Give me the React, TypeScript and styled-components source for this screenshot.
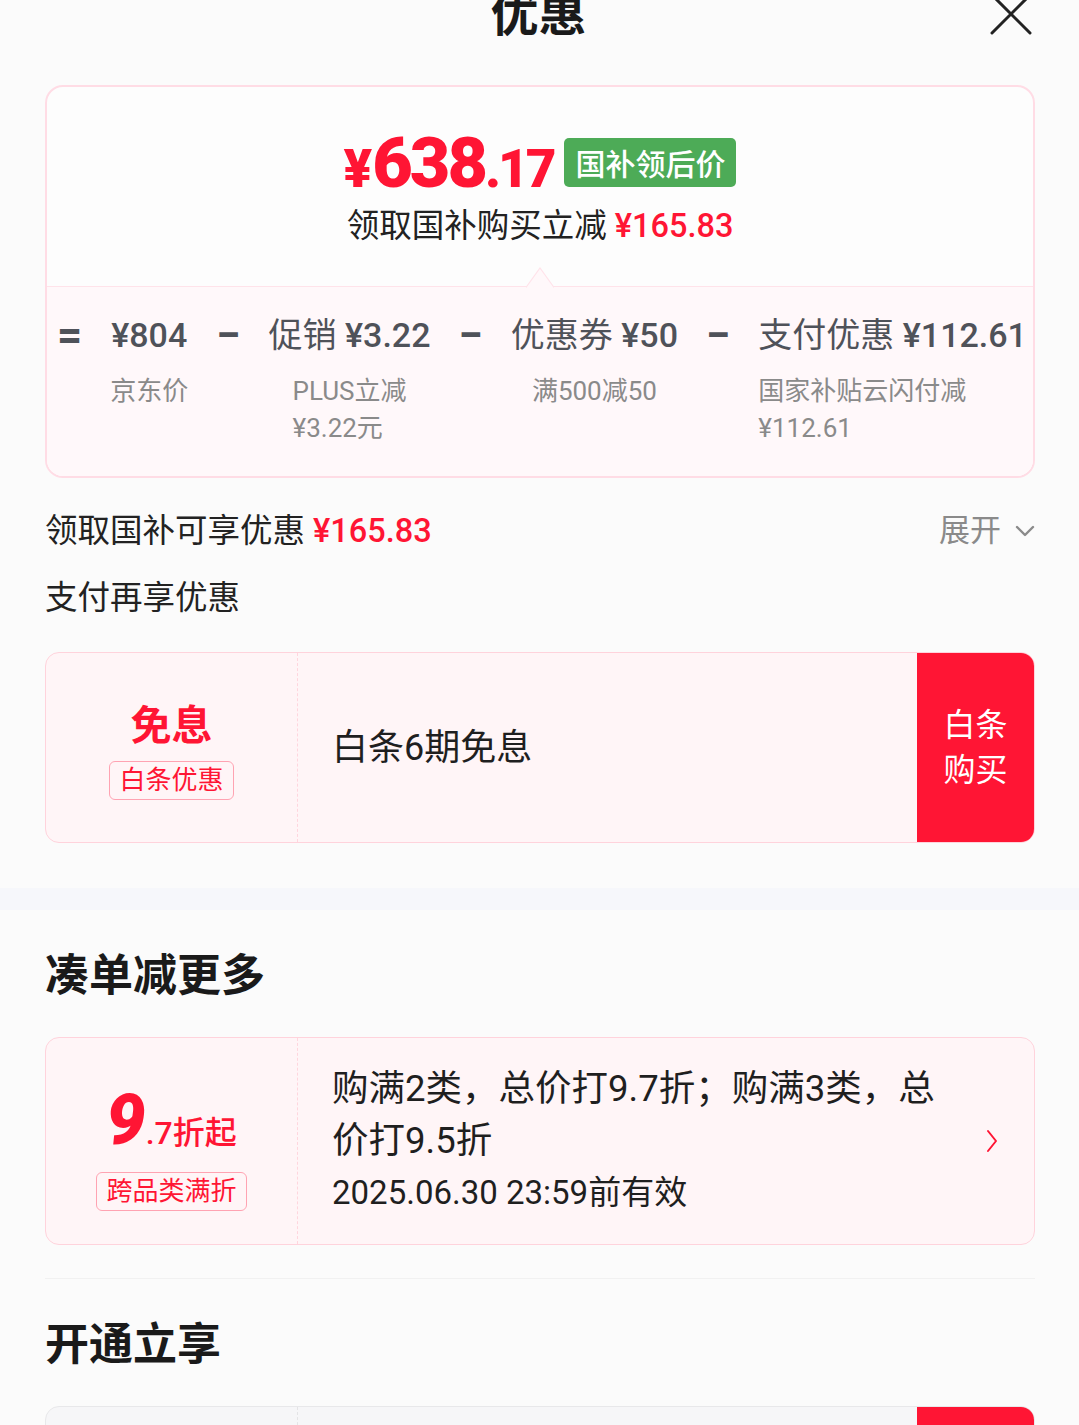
import React from 'react';
import styled, { createGlobalStyle } from 'styled-components';

const RED = '#ff1534';
const SLATE = '#4f5259';

const GlobalStyle = createGlobalStyle`
  html, body {
    margin: 0;
    padding: 0;
    background: #fbfbfb;
  }
  body {
    font-family: Roboto, "Noto Sans CJK SC", sans-serif;
    color: #222;
    overflow: hidden;
  }
`;

const Page = styled.div`
  width: 1079px;
  display: flex;
  flex-direction: column;
`;

const Section = styled.div`
  display: flex;
  flex-direction: column;
  padding: 0 44px 0 45px;
`;

const Header = styled.div`
  display: grid;
  grid-template-columns: 1fr auto 1fr;
  align-items: start;
  height: 94px;
  margin-top: -9px;
  padding: 0 47px 0 45px;
`;

const Title = styled.div`
  grid-column: 2;
  font-size: 48px;
  line-height: 48px;
  font-weight: 700;
  color: #1a1a1a;
`;

const CloseButton = styled.div`
  grid-column: 3;
  justify-self: end;
  width: 42px;
  height: 42px;
  margin-top: 2px;
`;

const PriceCard = styled.div`
  display: flex;
  flex-direction: column;
  border: 2px solid #ffdce5;
  border-radius: 18px;
  background: #fdfdfd;
  overflow: hidden;
`;

const PriceTop = styled.div`
  display: flex;
  flex-direction: column;
  align-items: center;
  height: 199px;
  padding-top: 45px;
  box-sizing: border-box;
`;

const PriceRow = styled.div`
  display: flex;
  align-items: center;
  gap: 11px;
  height: 66px;
`;

const PriceValue = styled.div`
  padding-top: 14px;
  color: ${RED};
  font-weight: 900;
  line-height: 66px;
  white-space: nowrap;
`;

const PricePart = styled.span<{ size: number; spacing: number }>`
  font-size: ${(p) => p.size}px;
  letter-spacing: ${(p) => p.spacing}px;
`;

const GreenTag = styled.div`
  display: flex;
  align-items: center;
  justify-content: center;
  width: 172px;
  height: 49px;
  margin-top: -6px;
  border-radius: 5px;
  background: #4dab57;
  color: #fff;
  font-size: 30px;
  font-weight: 500;
`;

const SubTitle = styled.div`
  margin-top: 8px;
  font-size: 32.5px;
  line-height: 40px;
  color: #222;
`;

const RedText = styled.span`
  color: ${RED};
  font-weight: 500;
`;

const PriceBottom = styled.div`
  position: relative;
  flex: 1;
  display: flex;
  justify-content: space-between;
  align-items: flex-start;
  padding: 28px 6px 29px 10px;
  border-top: 1px solid #ffe3ea;
  background: #fff8fa;
`;

const Pointer = styled.svg`
  position: absolute;
  top: -20px;
  left: calc(50% - 14px);
`;

const Operator = styled.div`
  font-size: 44px;
  line-height: 40px;
  font-weight: 700;
  color: ${SLATE};
`;

const FormulaItem = styled.div<{ start?: boolean }>`
  display: flex;
  flex-direction: column;
  align-items: ${(p) => (p.start ? 'flex-start' : 'center')};
`;

const FormulaValue = styled.div`
  font-size: 34px;
  line-height: 40px;
  font-weight: 400;
  color: ${SLATE};
  white-space: nowrap;
`;

const Amount = styled.span`
  font-weight: 500;
`;

const FormulaLabel = styled.div`
  margin-top: 18px;
  font-size: 26px;
  line-height: 37px;
  color: #8a8a8a;
  text-align: left;
`;

const InfoRow = styled.div<{ gap: number }>`
  display: flex;
  justify-content: space-between;
  align-items: center;
  margin-top: ${(p) => p.gap}px;
  font-size: 32.5px;
  line-height: 44px;
`;

const Expand = styled.div`
  display: flex;
  align-items: center;
  gap: 14px;
  font-size: 31px;
  color: #8a8a8a;
`;

const CouponCard = styled.div<{ muted?: boolean; height: number }>`
  display: grid;
  grid-template-columns: 252px 1fr ${(p) => (p.muted ? '117px' : 'auto')};
  height: ${(p) => p.height}px;
  margin-top: 32px;
  border: 1px solid ${(p) => (p.muted ? '#e8e8ea' : '#ffd3dc')};
  border-radius: 14px;
  background: ${(p) => (p.muted ? '#f6f6f8' : '#fff5f7')};
  box-sizing: border-box;
  overflow: hidden;
`;

const CouponLeft = styled.div<{ muted?: boolean }>`
  display: flex;
  flex-direction: column;
  align-items: center;
  justify-content: center;
  gap: 12px;
  border-right: 1px dashed ${(p) => (p.muted ? '#e4e4e6' : '#ffd6de')};
`;

const CouponBig = styled.div`
  color: ${RED};
  font-size: 41px;
  line-height: 46px;
  font-weight: 700;
`;

const CouponTag = styled.div`
  padding: 0 9px;
  height: 39px;
  line-height: 37px;
  border: 1px solid #ffa3b2;
  border-radius: 6px;
  color: ${RED};
  font-size: 26px;
  box-sizing: border-box;
`;

const CouponMiddle = styled.div`
  display: flex;
  align-items: center;
  justify-content: space-between;
  padding: 0 36px 0 34px;
`;

const CouponText = styled.div<{ size: number }>`
  max-width: 615px;
  font-size: ${(p) => p.size}px;
  line-height: 52px;
  color: #1f1f1f;
`;

const CouponNote = styled.div`
  font-size: 33px;
`;

const BuyButton = styled.div`
  display: flex;
  align-items: center;
  justify-content: center;
  width: 117px;
  background: ${RED};
  color: #fff;
  font-size: 32px;
  line-height: 45px;
  text-align: center;
`;

const Discount = styled.div`
  display: flex;
  align-items: baseline;
  color: ${RED};
  font-weight: 700;
  line-height: 70px;
`;

const DiscountBig = styled.span`
  font-size: 70px;
  font-weight: 900;
  font-style: italic;
`;

const DiscountSmall = styled.span`
  font-size: 32px;
  font-weight: 500;
`;

const GrayBand = styled.div`
  height: 22px;
  margin-top: 45px;
  background: #f6f7fb;
`;

const SectionTitle = styled.div<{ gap: number }>`
  margin-top: ${(p) => p.gap}px;
  font-size: 44px;
  line-height: 50px;
  font-weight: 700;
  color: #1a1a1a;
`;

const Divider = styled.div`
  height: 1px;
  margin-top: 33px;
  background: #f1f1f1;
`;

function App() {
  return (
    <Page>
      <GlobalStyle />
      <Header>
        <Title>优惠</Title>
        <CloseButton>
          <svg width="42" height="42" viewBox="0 0 42 42">
            <path d="M2 2 L40 40 M40 2 L2 40" stroke="#222" strokeWidth="3" strokeLinecap="round" />
          </svg>
        </CloseButton>
      </Header>

      <Section>
        <PriceCard>
          <PriceTop>
            <PriceRow>
              <PriceValue>
                <PricePart size={53} spacing={0}>¥</PricePart>
                <PricePart size={70} spacing={-3}>638</PricePart>
                <PricePart size={53} spacing={-3}>.17</PricePart>
              </PriceValue>
              <GreenTag>国补领后价</GreenTag>
            </PriceRow>
            <SubTitle>
              领取国补购买立减
              {' '}
              <RedText>¥165.83</RedText>
            </SubTitle>
          </PriceTop>
          <PriceBottom>
            <Pointer width="28" height="21" viewBox="0 0 28 21">
              <path d="M0 20.5 L14 1 L28 20.5" fill="#fff8fa" stroke="#ffe3ea" strokeWidth="1.2" />
            </Pointer>
            <Operator>=</Operator>
            <FormulaItem>
              <FormulaValue><Amount>¥804</Amount></FormulaValue>
              <FormulaLabel>京东价</FormulaLabel>
            </FormulaItem>
            <Operator>−</Operator>
            <FormulaItem>
              <FormulaValue>
                促销
                {' '}
                <Amount>¥3.22</Amount>
              </FormulaValue>
              <FormulaLabel>
                PLUS立减
                <br />
                ¥3.22元
              </FormulaLabel>
            </FormulaItem>
            <Operator>−</Operator>
            <FormulaItem>
              <FormulaValue>
                优惠券
                {' '}
                <Amount>¥50</Amount>
              </FormulaValue>
              <FormulaLabel>满500减50</FormulaLabel>
            </FormulaItem>
            <Operator>−</Operator>
            <FormulaItem start>
              <FormulaValue>
                支付优惠
                {' '}
                <Amount>¥112.61</Amount>
              </FormulaValue>
              <FormulaLabel>
                国家补贴云闪付减
                <br />
                ¥112.61
              </FormulaLabel>
            </FormulaItem>
          </PriceBottom>
        </PriceCard>

        <InfoRow gap={31}>
          <div>
            领取国补可享优惠
            {' '}
            <RedText>¥165.83</RedText>
          </div>
          <Expand>
            展开
            <svg width="20" height="12" viewBox="0 0 20 12">
              <path d="M2 2 L10 10 L18 2" fill="none" stroke="#8a8a8a" strokeWidth="2.4" strokeLinecap="round" strokeLinejoin="round" />
            </svg>
          </Expand>
        </InfoRow>
        <InfoRow gap={23}>
          <div>支付再享优惠</div>
        </InfoRow>

        <CouponCard height={191}>
          <CouponLeft style={{ paddingTop: 8 }}>
            <CouponBig>免息</CouponBig>
            <CouponTag>白条优惠</CouponTag>
          </CouponLeft>
          <CouponMiddle>
            <CouponText size={36}>白条6期免息</CouponText>
          </CouponMiddle>
          <BuyButton>
            白条
            <br />
            购买
          </BuyButton>
        </CouponCard>
      </Section>

      <GrayBand />

      <Section>
        <SectionTitle gap={41}>凑单减更多</SectionTitle>
        <CouponCard height={208} style={{ marginTop: 36 }}>
          <CouponLeft style={{ gap: 4, paddingTop: 14 }}>
            <Discount>
              <DiscountBig>9</DiscountBig>
              <DiscountSmall>.7折起</DiscountSmall>
            </Discount>
            <CouponTag>跨品类满折</CouponTag>
          </CouponLeft>
          <CouponMiddle>
            <CouponText size={36.5}>
              购满2类，总价打9.7折；购满3类，总价打9.5折
              <CouponNote>2025.06.30 23:59前有效</CouponNote>
            </CouponText>
            <svg width="12" height="24" viewBox="0 0 12 24">
              <path d="M2 2 L10 12 L2 22" fill="none" stroke={RED} strokeWidth="2" strokeLinecap="round" strokeLinejoin="round" />
            </svg>
          </CouponMiddle>
        </CouponCard>
        <Divider />
        <SectionTitle gap={41}>开通立享</SectionTitle>
        <CouponCard muted height={191} style={{ marginTop: 36 }}>
          <CouponLeft muted />
          <CouponMiddle />
          <BuyButton />
        </CouponCard>
      </Section>
    </Page>
  );
}

export default App;
